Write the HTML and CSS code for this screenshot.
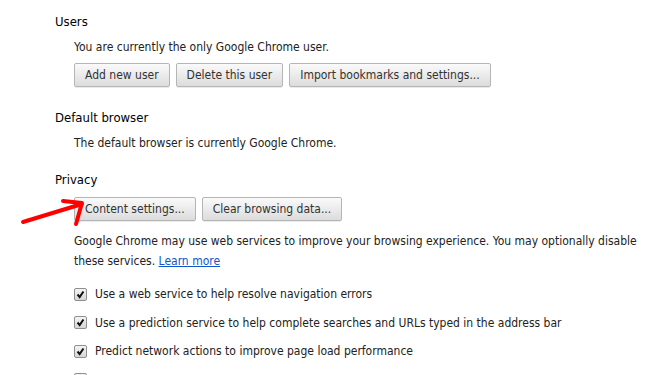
FILE: index.html
```html
<!DOCTYPE html>
<html lang="en">
<head>
    <meta charset="UTF-8">
    <title>Settings</title>
    <link rel="stylesheet" href="styles.css">
</head>
<body>
    <div class="page">
        <section class="section">
            <h3>Users</h3>
            <div class="content">
                <p class="line">You are currently the only Google Chrome user.</p>
                <div class="buttons">
                    <button>Add new user</button>
                    <button>Delete this user</button>
                    <button>Import bookmarks and settings...</button>
                </div>
            </div>
        </section>

        <section class="section section-default">
            <h3>Default browser</h3>
            <div class="content">
                <p class="line">The default browser is currently Google Chrome.</p>
            </div>
        </section>

        <section class="section section-privacy">
            <h3>Privacy</h3>
            <div class="content">
                <div class="buttons">
                    <button>Content settings...</button>
                    <button>Clear browsing data...</button>
                </div>
                <p class="para">Google Chrome may use web services to improve your browsing experience. You may optionally disable these services. <a href="#">Learn more</a></p>
                <label class="check"><span class="box"><svg viewBox="0 0 13 13"><path d="M3 6.5 L5.5 9.5 L10 3"/></svg></span>Use a web service to help resolve navigation errors</label>
                <label class="check"><span class="box"><svg viewBox="0 0 13 13"><path d="M3 6.5 L5.5 9.5 L10 3"/></svg></span>Use a prediction service to help complete searches and URLs typed in the address bar</label>
                <label class="check"><span class="box"><svg viewBox="0 0 13 13"><path d="M3 6.5 L5.5 9.5 L10 3"/></svg></span>Predict network actions to improve page load performance</label>
                <div class="check"><span class="box"></span></div>
            </div>
            <!-- red arrow drawn over the screenshot -->
            <svg class="arrow" width="80" height="45" viewBox="0 0 80 45">
                <path d="M8 32 L67 14 M48 11 L67 13 L61 34"/>
            </svg>
        </section>
    </div>
</body>
</html>
```

FILE: styles.css
```css
* {
    margin: 0;
    padding: 0;
    box-sizing: border-box;
}

body {
    font-family: "DejaVu Sans Condensed", "DejaVu Sans", sans-serif;
    font-size: 12px;
    color: #222;
    background: #fff;
    overflow: hidden;
}

.page {
    padding: 12px 0 0 55px;
}

.section {
    position: relative;
}

h3 {
    font-size: 13px;
    font-weight: normal;
    line-height: 20px;
    color: #000;
}

.content {
    padding-left: 19px;
}

.line {
    margin-top: 5px;
    line-height: 20px;
}

.buttons {
    display: flex;
    gap: 6px;
    margin-top: 6px;
}

button {
    font-family: inherit;
    font-size: 12px;
    color: #333;
    height: 24px;
    padding: 0 10px;
    border: 1px solid #b5b5b5;
    border-radius: 2px;
    background: linear-gradient(#fafafa, #dcdcdc);
    box-shadow: 0 1px 0 rgba(0, 0, 0, 0.08);
}

.section-default {
    margin-top: 21px;
}

.section-privacy {
    margin-top: 17px;
}

.section-privacy .buttons {
    margin-top: 7px;
}

.para {
    margin-top: 10px;
    line-height: 20px;
    padding-right: 6px;
}

.para a {
    color: #15c;
}

.check {
    display: flex;
    align-items: center;
    height: 28.5px;
    line-height: 20px;
}

.check:first-of-type {
    margin-top: 9px;
}

.box {
    width: 13px;
    height: 13px;
    margin-right: 8px;
    border: 1px solid #8f8f8f;
    border-radius: 2px;
    background: linear-gradient(#f4f4f4, #d6d6d6);
    flex-shrink: 0;
}

.box svg {
    display: block;
    width: 11px;
    height: 11px;
}

.box path {
    fill: none;
    stroke: #111;
    stroke-width: 2.4;
}

.arrow {
    position: absolute;
    left: -40px;
    top: 20px;
}

.arrow path {
    fill: none;
    stroke: #f00;
    stroke-width: 4;
    stroke-linecap: round;
    stroke-linejoin: round;
}
```
